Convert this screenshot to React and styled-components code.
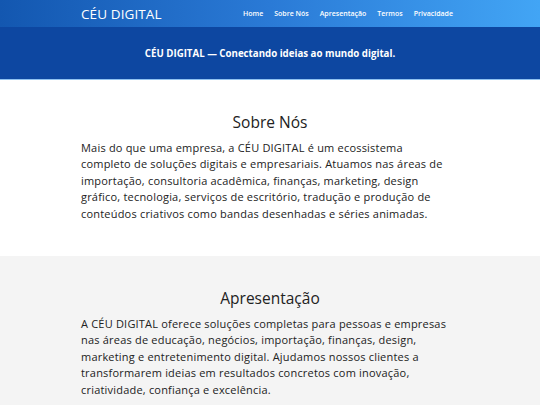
import React from "react";
import styled, { createGlobalStyle } from "styled-components";

const GlobalStyle = createGlobalStyle`
  * { box-sizing: border-box; }
  body {
    margin: 0;
    font-family: "Open Sans", "Liberation Sans", sans-serif;
    background: #f4f4f4;
    color: #333;
  }
`;

const Header = styled.header`
  height: 27px;
  background: linear-gradient(90deg, #1357b0 0%, #2a7ad6 50%, #42a5f5 100%);
`;

const Bar = styled.div`
  width: 70%;
  height: 100%;
  margin: 0 auto;
  display: flex;
  align-items: center;
  justify-content: space-between;
`;

const Logo = styled.div`
  color: #fff;
  font-size: 13.5px;
  font-weight: 500;
  letter-spacing: 0.1px;
`;

const Nav = styled.nav`
  display: flex;
  gap: 11px;
  margin-right: 6px;
`;

const NavLink = styled.a`
  color: #fff;
  font-size: 7px;
  font-weight: 600;
  text-decoration: none;
`;

const Hero = styled.div`
  height: 53px;
  background: #0d47a1;
  border-bottom: 1px solid #90c2f0;
  display: flex;
  align-items: center;
  justify-content: center;
  color: #fff;
  font-size: 9.7px;
  font-weight: 700;
`;

const Section = styled.section`
  background: ${(p) => (p.$alt ? "#f4f4f4" : "#fff")};
  padding: 30px 0 ${(p) => (p.$alt ? "30px" : "34px")};
`;

const Inner = styled.div`
  width: 70%;
  margin: 0 auto;
`;

const Title = styled.h2`
  margin: 0 0 6px;
  text-align: center;
  font-size: 15.5px;
  line-height: 24px;
  font-weight: 500;
  color: #222;
`;

const Text = styled.p`
  margin: 0;
  max-width: 372px;
  font-size: 11px;
  line-height: 16.4px;
  letter-spacing: 0.2px;
  color: #222;
`;

export default function App() {
  const links = ["Home", "Sobre Nós", "Apresentação", "Termos", "Privacidade"];
  return (
    <>
      <GlobalStyle />
      <Header>
        <Bar>
          <Logo>CÉU DIGITAL</Logo>
          <Nav>
            {links.map((l) => (
              <NavLink key={l} href="#">
                {l}
              </NavLink>
            ))}
          </Nav>
        </Bar>
      </Header>
      <Hero>CÉU DIGITAL — Conectando ideias ao mundo digital.</Hero>
      <Section>
        <Inner>
          <Title>Sobre Nós</Title>
          <Text>
            Mais do que uma empresa, a CÉU DIGITAL é um ecossistema completo de
            soluções digitais e empresariais. Atuamos nas áreas de importação,
            consultoria acadêmica, finanças, marketing, design gráfico,
            tecnologia, serviços de escritório, tradução e produção de conteúdos
            criativos como bandas desenhadas e séries animadas.
          </Text>
        </Inner>
      </Section>
      <Section $alt>
        <Inner>
          <Title>Apresentação</Title>
          <Text>
            A CÉU DIGITAL oferece soluções completas para pessoas e empresas nas
            áreas de educação, negócios, importação, finanças, design, marketing
            e entretenimento digital. Ajudamos nossos clientes a transformarem
            ideias em resultados concretos com inovação, criatividade, confiança
            e excelência.
          </Text>
        </Inner>
      </Section>
    </>
  );
}
